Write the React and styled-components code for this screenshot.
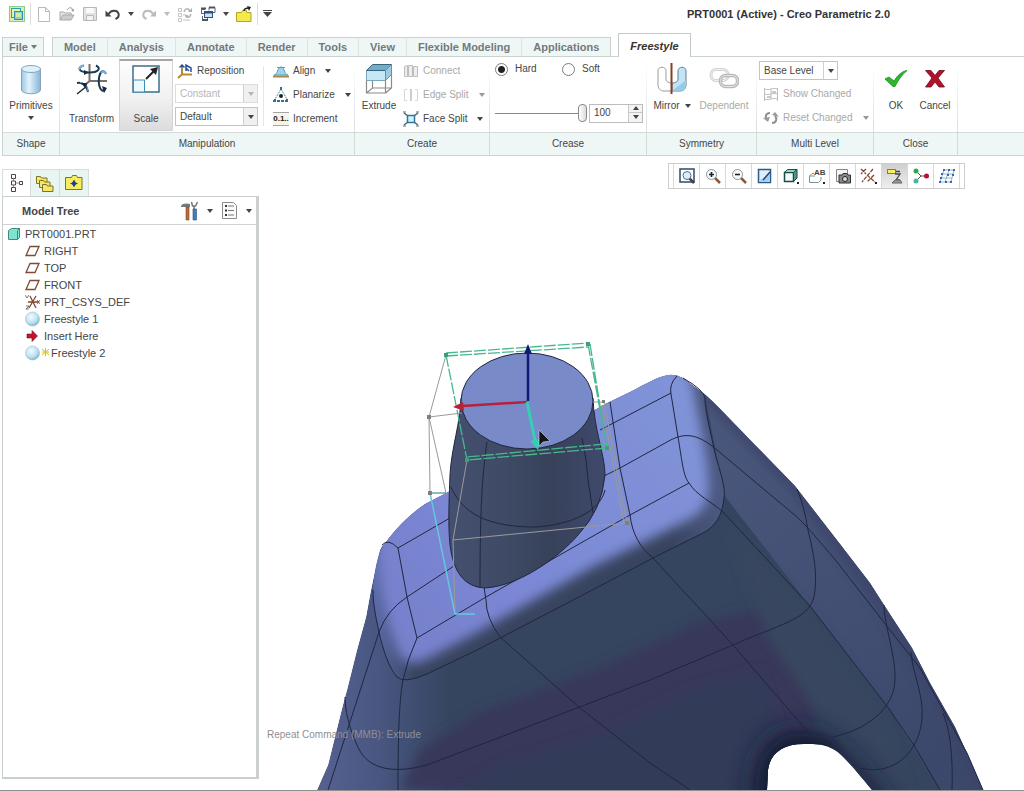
import React from 'react';
import styled, { createGlobalStyle, css } from 'styled-components';

const GlobalStyle = createGlobalStyle`
  * {
    box-sizing: border-box;
  }
  body {
    margin: 0;
    background: #fff;
    color: #454545;
    font: 10px/12px "Liberation Sans", Arial, sans-serif;
  }
  button, select, input {
    font: inherit;
    color: inherit;
  }
  button {
    padding: 0;
    border: 0;
    background: none;
  }
  svg {
    display: block;
    flex: none;
  }
`;

const Window = styled.div`
  display: flex;
  flex-direction: column;
  min-height: 100vh;
  border-bottom: 1px solid #8f8f8f;
`;

/* ---------- title bar ---------- */

const TitleBar = styled.header`
  display: flex;
  align-items: center;
  justify-content: space-between;
  height: 27px;
  margin-bottom: 6px;
  padding: 0 134px 0 9px;
`;

const QuickAccess = styled.div`
  display: flex;
  align-items: center;
  gap: 7px;
`;

const QuickDivider = styled.span`
  width: 1px;
  height: 22px;
  margin: 0 -2px;
  background: #dcdcdc;
`;

const Title = styled.h1`
  margin: 0;
  font-size: 11px;
  font-weight: bold;
  color: #333;
`;

/* ---------- tabs ---------- */

const TabBar = styled.nav`
  display: flex;
  align-items: flex-end;
  height: 23px;
  padding-left: 2px;
`;

const TabSet = styled.div`
  display: flex;
  margin: 0 7px 0 8px;
  border: 1px solid #c9d1cf;
  border-bottom: 0;
`;

const Tab = styled.button`
  height: 18px;
  padding: 0 11px;
  background: #eef7f5;
  border-right: 1px solid #dde5e3;
  font-size: 11px;
  font-weight: bold;
  color: #74797b;
  &:last-child {
    border-right: 0;
  }
`;

const FileTab = styled(Tab)`
  display: flex;
  align-items: center;
  gap: 3px;
  height: 19px;
  padding: 0 6px;
  border: 1px solid #c9d1cf;
  border-bottom: 0;
`;

const ActiveTab = styled(Tab)`
  position: relative;
  height: 24px;
  margin-bottom: -1px;
  background: #fff;
  border: 1px solid #c3cac8;
  border-bottom: 0;
  font-style: italic;
  color: #333;
  &:last-child {
    border-right: 1px solid #c3cac8;
  }
`;

/* ---------- ribbon ---------- */

const Ribbon = styled.div`
  display: flex;
  margin-left: 2px;
  border: 1px solid #cbd3d1;
  border-right: 0;
`;

const GroupBox = styled.section`
  display: flex;
  flex-direction: column;
  flex: none;
  width: ${p => p.$width}px;
`;

const GroupBody = styled.div`
  display: flex;
  height: 75px;
  padding: 2px 0 1px ${p => p.$pad || 0}px;
  justify-content: ${p => (p.$center ? 'center' : 'flex-start')};
  border-right: 1px solid;
  border-image: linear-gradient(#fff 10%, #d8dedc) 1;
`;

const groupStrip = css`
  height: 23px;
  border-top: 1px solid #d3dad8;
  background: #eef7f5;
`;

const GroupLabel = styled.h2`
  ${groupStrip}
  margin: 0;
  border-right: 1px solid #d3dad8;
  font-size: 10px;
  font-weight: normal;
  line-height: 22px;
  text-align: center;
`;

const RibbonRest = styled.div`
  ${groupStrip}
  flex: 1;
  align-self: flex-end;
`;

const BigButton = styled.button`
  display: flex;
  flex-direction: column;
  align-items: center;
  width: ${p => p.$width}px;
  height: 72px;
  padding-top: 4px;
  white-space: nowrap;
  ${p => p.$pressed && css`
    border: 1px solid #d4d4d4;
    border-top: 2px solid #a5a5a5;
    padding-top: 2px;
    background: linear-gradient(#fdfdfd, #f1f1f1 55%, #dcdcdc);
  `}
  &:disabled {
    color: #a9a9a9;
  }
`;

const BigIcon = styled.span`
  display: flex;
  height: ${p => (p.$tall ? 50 : 37)}px;
`;

const BigText = styled.span`
  display: flex;
  align-items: center;
  gap: 5px;
`;

const BigCaret = styled.span`
  display: flex;
  align-items: center;
  height: 12px;
`;

const Stack = styled.div`
  display: flex;
  flex-direction: column;
  width: ${p => p.$width}px;
  margin-left: 2px;
`;

const StackRow = styled.div`
  display: flex;
  align-items: center;
  height: ${p => p.$row || 24}px;
`;

const SmallButton = styled.button`
  display: flex;
  align-items: center;
  gap: 4px;
  padding-left: ${p => p.$indent || 0}px;
  white-space: nowrap;
  &:disabled {
    color: #a9a9a9;
  }
`;

const CaretGap = styled.span`
  width: 2px;
`;

const StackDivider = styled.span`
  width: 1px;
  height: 60px;
  margin: 7px 7px 0 5px;
  background: #e6e6e6;
`;

const SelectFrame = styled.span`
  position: relative;
  display: block;
  width: ${p => p.$width}px;
  height: 19px;
`;

const Select = styled.select`
  width: 100%;
  height: 100%;
  padding: 0 18px 0 4px;
  border: 1px solid #c4c4c4;
  border-radius: 0;
  background: #fff;
  appearance: none;
  &:disabled {
    border-color: #dcdcdc;
    color: #b5b5b5;
    opacity: 1;
  }
`;

const SelectArrow = styled.span`
  position: absolute;
  top: 1px;
  right: 1px;
  bottom: 1px;
  display: flex;
  align-items: center;
  justify-content: center;
  width: 14px;
  border-left: 1px solid #d0d0d0;
  background: ${p => (p.$plain ? 'none' : '#f0f0f0')};
  pointer-events: none;
`;

const CreaseRow = styled.div`
  display: flex;
  align-items: center;
  height: 20px;
`;

const RadioLabel = styled.label`
  display: flex;
  align-items: center;
  gap: 7px;
  width: 67px;
`;

const Radio = styled.input`
  width: 13px;
  height: 13px;
  margin: 0;
  border: 1px solid #7d7d7d;
  border-radius: 50%;
  appearance: none;
  background: #fff;
  &:checked {
    background: radial-gradient(#222 0 3px, #fff 4px);
  }
`;

const Slider = styled.input`
  width: 92px;
  height: 18px;
  margin: 0 2px 0 0;
  background: linear-gradient(#8a8a8a, #8a8a8a) 0 50% / 100% 1px no-repeat;
  appearance: none;
  &::-webkit-slider-thumb {
    width: 9px;
    height: 18px;
    border: 1px solid #8a8a8a;
    border-radius: 4px;
    background: linear-gradient(90deg, #fff, #dcdcdc);
    appearance: none;
  }
`;

const NumberBox = styled.span`
  display: flex;
  width: 54px;
  height: 19px;
  border: 1px solid #bdbdbd;
`;

const NumberInput = styled.input`
  flex: 1;
  min-width: 0;
  padding: 0 0 0 4px;
  border: 0;
`;

const Spin = styled.span`
  display: grid;
  grid-template-rows: 1fr 1fr;
  width: 14px;
  border-left: 1px solid #c8c8c8;
  background: #f4f4f4;
`;

const SpinButton = styled.button`
  display: flex;
  align-items: center;
  justify-content: center;
  &:first-child {
    border-bottom: 1px solid #c8c8c8;
  }
`;

/* ---------- side panel ---------- */

const Workspace = styled.main`
  display: flex;
  flex: 1;
`;

const Side = styled.aside`
  display: flex;
  flex-direction: column;
  flex: none;
  width: 260px;
  padding: 13px 0 11px 2px;
`;

const SideTabs = styled.div`
  display: flex;
`;

const SideTab = styled.button`
  display: flex;
  align-items: center;
  justify-content: center;
  width: 29px;
  height: 27px;
  border: 1px solid #d6dedc;
  border-left-width: ${p => (p.$on ? 1 : 0)}px;
  border-bottom: 0;
  background: ${p => (p.$on ? '#fff' : '#e9f5f2')};
`;

const TreePanel = styled.div`
  flex: 1;
  margin-right: 1px;
  border: 1px solid #c9cfcd;
  border-right: 3px solid #cbcfce;
  border-bottom: 2px solid #c9cfcd;
`;

const TreeHeader = styled.div`
  display: flex;
  align-items: center;
  gap: 8px;
  height: 28px;
  padding: 0 4px 0 19px;
  border-bottom: 1px solid #cfd4d3;
`;

const TreeTitle = styled.h2`
  flex: 1;
  margin: 0;
  font-size: 11px;
  font-weight: bold;
`;

const Tree = styled.ul`
  margin: 0;
  padding: 0 0 0 4px;
  list-style: none;
  font-size: 11px;
`;

const TreeItem = styled.li`
  display: flex;
  align-items: center;
  gap: ${p => (p.$tight ? 2 : 4)}px;
  height: 17px;
  padding-left: ${p => (p.$root ? 0 : 18)}px;
`;

/* ---------- graphics area ---------- */

const Viewport = styled.section`
  position: relative;
  display: flex;
  flex-direction: column;
  flex: 1;
  min-width: 0;
`;

const ViewBar = styled.div`
  display: flex;
  align-self: flex-end;
  height: 26px;
  margin: 7px 59px 11px 0;
  padding: 0 4px;
  border: 1px solid #cdcdcd;
`;

const ViewButton = styled.button`
  display: flex;
  align-items: center;
  justify-content: center;
  width: 26px;
  border-left: 1px solid #d8d8d8;
  background: ${p => (p.$on ? 'linear-gradient(#cfcfcf, #eee)' : '#fff')};
  &:last-child {
    width: 27px;
    border-right: 1px solid #d8d8d8;
  }
`;

const Canvas = styled.div`
  position: relative;
  flex: 1;
  min-height: 400px;
  & > svg {
    position: absolute;
    width: 100%;
    height: 100%;
  }
`;

const Hint = styled.p`
  position: absolute;
  bottom: 49px;
  left: 7px;
  margin: 0;
  color: #8f8f92;
`;

/* ---------- icons ---------- */

const Icon = ({ size = 16, w, h, children }) => (
  <svg width={w || size} height={h || size} viewBox={`0 0 ${w || size} ${h || size}`} fill="none" aria-hidden="true">
    {children}
  </svg>
);

const Caret = ({ color = '#444', up }) => (
  <Icon w={6} h={4}>
    <path d={up ? 'M0 4h6L3 0z' : 'M0 0h6L3 4z'} fill={color} />
  </Icon>
);

const LogoIcon = () => (
  <Icon>
    <rect x="0.5" y="0.5" width="15" height="15" fill="#d9efb0" stroke="#8cc98e" />
    <rect x="2.5" y="2.5" width="9" height="9" fill="#f2f29a" stroke="#2f9fb0" />
    <rect x="5.5" y="5.5" width="8" height="8" fill="#8fd6c0" stroke="#2b8fc6" />
    <rect x="7" y="7" width="5" height="4" fill="#d5eaa0" />
  </Icon>
);

const NewIcon = () => (
  <Icon>
    <path d="M2.5 1.5h7l4 4v10h-11z" fill="#fff" stroke="#b9b9b9" />
    <path d="M9.5 1.5v4h4" stroke="#b9b9b9" />
  </Icon>
);

const OpenIcon = () => (
  <Icon>
    <path d="M1 14V6h4l1 1h6v2" fill="#e4e4e4" stroke="#aaa" />
    <path d="M1 14l3-5h11l-3 5z" fill="#ccc" stroke="#aaa" />
    <path d="M8 4c2-3 5-3 6 0" stroke="#999" />
    <path d="M12 3.5h3.5L14 6z" fill="#999" />
  </Icon>
);

const SaveIcon = () => (
  <Icon>
    <path d="M1.5 1.5h13v13h-13z" fill="#e2e2e2" stroke="#b8b8b8" />
    <path d="M4 2h8v5H4z" fill="#fafafa" />
    <path d="M4.5 9.5h7v5h-7z" fill="#f2f2f2" stroke="#b8b8b8" />
  </Icon>
);

const UndoIcon = () => (
  <Icon>
    <path d="M3.5 8C6 4 12 3.5 13.5 7.5c.8 2.500-.8 4.500-3 5.500" stroke="#444" strokeWidth="2" />
    <path d="M0.500 4.500v6h6z" fill="#444" />
  </Icon>
);

const RedoIcon = () => (
  <Icon>
    <path d="M12 8C10 4 4 3.500 2.500 7.500c-.8 2.500.8 4.500 3 5.500" stroke="#bbb" strokeWidth="2" />
    <path d="M15 4.500v6H9z" fill="#bbb" />
  </Icon>
);

const RegenIcon = () => (
  <Icon>
    <path d="M1.500 2.500h3v3h-3zM1.500 7.500h3v3h-3zM1.500 12.500h3v3h-3zM6 14h7M6 9h2" stroke="#c4c4c4" />
    <path d="M7 6c1-4 4-4 6-1M14 8c-1 4-4 4-5 2" stroke="#b5b5b5" strokeWidth="1.500" />
    <path d="M11 6h4V2zM8 8l1 4 3-2z" fill="#b0b0b0" />
  </Icon>
);

const WindowsIcon = () => (
  <Icon>
    <path d="M5 3.500H1.500v4H5M9 1.500h6v5h-3M9 1.500v3M2.500 10v4.500h5V12" stroke="#5a6478" />
    <path d="M1 2.500h5M9 1.500h6M2 14h6" stroke="#4a5468" strokeWidth="2" />
    <rect x="4.500" y="5.500" width="8" height="6" fill="#cfdff2" stroke="#33507c" />
    <path d="M4 6.500h9" stroke="#33507c" strokeWidth="2" />
  </Icon>
);

const CloseFolderIcon = () => (
  <Icon>
    <path d="M0.500 6.500h5l1-2h4v2h4.500v9H.5z" fill="#f3ea4c" stroke="#b5a42c" />
    <path d="M8 5c0-3 3-3 5-3" stroke="#222" strokeWidth="1.500" />
    <path d="M11 0l4 1-2 4z" fill="#222" />
  </Icon>
);

const PrimitiveIcon = () => (
  <Icon w={24} h={32}>
    <defs>
      <linearGradient id="cyl">
        <stop offset="0" stopColor="#9cc8e6" />
        <stop offset="0.4" stopColor="#e2f3fc" />
        <stop offset="1" stopColor="#86b4d6" />
      </linearGradient>
    </defs>
    <path d="M2.500 6v21c1 5 18 5 19 0V6z" fill="url(#cyl)" stroke="#87a3b8" />
    <ellipse cx="12" cy="6" rx="9.500" ry="3.500" fill="#dff2fb" stroke="#87a3b8" />
  </Icon>
);

const TransformIcon = () => (
  <Icon w={34} h={34}>
    <path d="M14.500 1v17H32M14.500 18L10 22" stroke="#77706c" strokeWidth="2" />
    <path d="M9 2.500C2 4 3 9 13 9.500c10 .5 14-4 8-7" stroke="#1c3a58" strokeWidth="2" />
    <path d="M9 2.500C5 3.500 4 5 5 6.500" stroke="#7fb0d4" strokeWidth="2" />
    <path d="M9 7l5 2.500L9 12z" fill="#1c2c40" />
    <path d="M31 11c-2-5-6-3-7 4-1 8 2 15 6 12" stroke="#1c3a58" strokeWidth="2" />
    <path d="M31 11c-1-3-3-3.500-5-1" stroke="#7fb0d4" strokeWidth="2" />
    <path d="M27 23l5 2-3 5z" fill="#1c2c40" />
    <path d="M2 20c5-1 10 2 11 9" stroke="#1c3a58" strokeWidth="2" />
    <path d="M12 23L2 31" stroke="#222" strokeWidth="1.500" />
    <path d="M5 19.500c4 .2 7 3 8 9" stroke="#7fb0d4" />
    <path d="M6 20h6l-1 6z" fill="#1c2c40" />
  </Icon>
);

const ScaleIcon = () => (
  <Icon w={28} h={32}>
    <rect x="1" y="3" width="26" height="26" fill="#fff" stroke="#3e6f8c" strokeWidth="1.500" />
    <rect x="1.500" y="17" width="11" height="12" fill="#eef9ff" stroke="#3e8fb8" />
    <path d="M14 16l9-9" stroke="#222" strokeWidth="2" />
    <path d="M26 4l-8 2 6 6z" fill="#222" />
  </Icon>
);

const RepositionIcon = () => (
  <Icon>
    <path d="M5 3v8.500h10M5 11.500L1 15" stroke="#b98a2c" strokeWidth="2" />
    <path d="M2.500 4.500L5 2l2.500 2.500M9 8V2l5 3v4M9 5l3 3" stroke="#2a4f94" strokeWidth="1.500" />
  </Icon>
);

const AlignIcon = () => (
  <Icon>
    <path d="M1 12c4 0 3-8 7-8s3 8 7 8z" fill="#9fd4ee" stroke="#5f9cb8" />
    <path d="M4 4.500h8" stroke="#888" />
    <path d="M0 13.500h16" stroke="#a9854b" strokeWidth="2" />
  </Icon>
);

const PlanarizeIcon = () => (
  <Icon>
    <path d="M8 2L1.500 13M8 2l6.500 11" stroke="#4c86a6" strokeDasharray="2 1" />
    <path d="M0 14h16" stroke="#36708f" strokeWidth="2" strokeDasharray="3 1" />
    <circle cx="8" cy="9" r="2" fill="#222" />
    <path d="M7 0h2v3H7zM1 12h2v3H1zM13 12h2v3h-2z" fill="#36708f" />
  </Icon>
);

const IncrementBadge = styled.span`
  width: 16px;
  height: 14px;
  border: 1px solid #a5a5a5;
  border-width: 1px 0;
  background: #f7f4ea;
  font-size: 8px;
  font-weight: bold;
  line-height: 12px;
  color: #222;
`;

const ExtrudeIcon = () => (
  <Icon w={28} h={34}>
    <path d="M1.500 17v13h19V17M20.500 30l6-5V10M1.500 30l6-5h19M7.500 25V14" stroke="#8a8a8a" strokeWidth="1.200" />
    <path d="M1.500 7.500h19v10h-19z" fill="#c5e7f8" stroke="#7aa6bd" />
    <path d="M1.500 7.500l6-6h19l-6 6z" fill="#6eaecb" stroke="#3d6478" />
    <path d="M20.500 7.500l6-6v10l-6 6z" fill="#9dcbe2" stroke="#6593a8" />
  </Icon>
);

const ConnectIcon = () => (
  <Icon>
    <path d="M1.500 3.500l3-1v11h-3zM5.500 2.500h4v11h-4zM10.500 3.500h4v10h-4z" fill="#eee" stroke="#bdbdbd" />
  </Icon>
);

const EdgeSplitIcon = () => (
  <Icon>
    <path d="M4 2.500H1.500v11H4M12 2.500h2.500v11H12" stroke="#d6d6d6" />
    <path d="M8 2v12" stroke="#bcbcbc" strokeWidth="1.500" />
  </Icon>
);

const FaceSplitIcon = () => (
  <Icon>
    <path d="M1 2l4 3M15 2l-4 3M1 14l4-3M15 14l-4-3" stroke="#3d6a80" strokeWidth="1.500" />
    <rect x="4.500" y="4.500" width="7" height="7" fill="#d6f1fb" stroke="#2f7898" strokeWidth="1.500" />
    <path d="M0 1h3M13 1h3M0 15h3M13 15h3" stroke="#666" />
  </Icon>
);

const MirrorIcon = () => (
  <Icon w={30} h={32}>
    <path d="M1 8c0-5 8-5 8 0v8c0 3 3 4 6 4v8H7c-4 0-6-3-6-6z" fill="#fff" stroke="#9a9a9a" />
    <path d="M29 8c0-5-8-5-8 0v8c0 3-3 4-6 4v8h8c4 0 6-3 6-6z" fill="#c3e4f5" stroke="#5d7f92" />
    <path d="M15 28h8c4 0 6-3 6-6v-5z" fill="#96cbe6" />
    <path d="M14.500 0v31" stroke="#8a3c20" strokeWidth="2" />
  </Icon>
);

const DependentIcon = () => (
  <Icon w={30} h={32}>
    <rect x="2" y="6.500" width="17" height="11" rx="5" stroke="#d2d2d2" strokeWidth="3" />
    <rect x="2" y="6.500" width="17" height="11" rx="5" stroke="#f3f3f3" />
    <rect x="11.500" y="12.500" width="17" height="11" rx="5" stroke="#b9b9b9" strokeWidth="3.500" />
    <rect x="11.500" y="12.500" width="17" height="11" rx="5" stroke="#e6e6e6" />
  </Icon>
);

const ShowChangedIcon = () => (
  <Icon>
    <path d="M1.500 2v13M14.500 2v13M2 3c4 2 8-2 12 0M2 8c4 2 8-2 12 0M2 13c4 2 8-2 12 0M8 3v10" stroke="#bdbdbd" />
    <path d="M9 5h4v2H9zM4 10h4v2H4z" fill="#c9c9c9" />
  </Icon>
);

const ResetIcon = () => (
  <Icon>
    <path d="M7 3C2 3 2 8 4 10M9 13c5 0 5-5 3-7" stroke="#8f8f8f" strokeWidth="2" />
    <path d="M0 8l5 4 2-5zM9 5l3-3 4 5z" fill="#9a9a9a" />
  </Icon>
);

const OkIcon = () => (
  <Icon w={24} h={32}>
    <path d="M1 16l4-2 5 4C13 13 18 8 23 7.500c-5 4-9 10-12 16H9z" fill="#2fb52f" stroke="#168a1c" strokeWidth="0.800" />
  </Icon>
);

const CancelIcon = () => (
  <Icon w={20} h={32}>
    <path d="M0.500 7.500H6l4 5 4-5h5.500L13 15l6.500 9H14l-4-5-4 5H.5L7 15z" fill="#b3102c" stroke="#6e0a1c" strokeWidth="0.800" />
  </Icon>
);

const TreeTabIcon = () => (
  <Icon w={14} h={20}>
    <path d="M1.500 1.500h4v4h-4zM1.500 8h4v4h-4zM1.500 14.500h4v4h-4zM9.500 8.500h3v3h-3z" stroke="#444" />
    <path d="M3.500 5.500V8M3.500 12v2.500M5.500 10h4" stroke="#888" />
  </Icon>
);

const FoldersIcon = () => (
  <Icon w={18} h={19}>
    {[[0, 1], [3, 5], [6, 9]].map(([x, y]) => (
      <path key={x} transform={`translate(${x} ${y})`} d="M0.500 1.500h4l1 1.500h5.500v5.500H0.500z" fill="#f4e76a" stroke="#7d7226" />
    ))}
  </Icon>
);

const FavoritesIcon = () => (
  <Icon w={18} h={16}>
    <path d="M0.500 2.500h6l1-2h4l1 2h4.500v12H.5z" fill="#f6ec60" stroke="#7d7226" />
    <path d="M9 5.500l3 3-3 3-3-3z" fill="#26398f" />
    <path d="M9 5v7M5.500 8.500h7" stroke="#26398f" />
  </Icon>
);

const ToolsIcon = () => (
  <Icon w={18} h={20}>
    <path d="M0 5c1-3 6-3 9-2v3H0z" fill="#707a80" />
    <path d="M5 6h3v13H5z" fill="#c06a3c" stroke="#7b4428" strokeWidth="0.600" />
    <path d="M10.500 1l1 4h3l2-4M13 5v4" stroke="#777" strokeWidth="1.500" />
    <path d="M12 8h3.500v11H12z" fill="#3f7fc0" stroke="#2a4f80" strokeWidth="0.600" />
  </Icon>
);

const ListIcon = () => (
  <Icon w={17} h={19}>
    <path d="M1.500 1.500h11l3 3v13h-14z" fill="#fbfbfb" stroke="#8c8c8c" />
    <path d="M4 5h2M4 9.500h2M4 14h2" stroke="#333" strokeWidth="2" />
    <path d="M7 5h6M7 9.500h6M7 14h6" stroke="#777" />
  </Icon>
);

const PartIcon = () => (
  <Icon w={14} h={14}>
    <path d="M1.500 3.500l3-2h8v9l-2 2h-9z" fill="#7fe3cf" stroke="#3d8a80" />
    <path d="M10.500 3.500v9M10.500 3.500l2-2" stroke="#3d8a80" />
  </Icon>
);

const PlaneIcon = () => (
  <Icon w={15} h={14}>
    <path d="M5 2.500h9l-4 9H1z" stroke="#7c4c36" strokeWidth="1.300" />
  </Icon>
);

const CsysIcon = () => (
  <Icon w={15} h={16}>
    <path d="M3 8h11M5 2l6 12M11 2L4 14" stroke="#85472f" strokeWidth="1.300" />
    <path d="M0 1l2 3 2-3M1 12h3l-3 3h3M12 6l3 4M15 6l-3 4" stroke="#555" strokeWidth="0.800" />
  </Icon>
);

const SphereIcon = () => (
  <Icon w={15} h={16}>
    <defs>
      <radialGradient id="sphere" cx="0.400" cy="0.350" r="0.650">
        <stop offset="0" stopColor="#f4fcff" />
        <stop offset="0.700" stopColor="#b8dff0" />
        <stop offset="1" stopColor="#86b2c8" />
      </radialGradient>
    </defs>
    <circle cx="7.500" cy="8" r="7" fill="url(#sphere)" stroke="#9cc0d2" strokeWidth="0.600" />
  </Icon>
);

const InsertIcon = () => (
  <Icon w={15} h={14}>
    <path d="M2 5h5V1.500l5.500 5.500L7 12.500V9H2z" fill="#c0142c" stroke="#7d1020" strokeWidth="0.600" />
  </Icon>
);

const SparkIcon = () => (
  <Icon w={7} h={16}>
    <path d="M0 4l7 6M7 4l-7 6M3.500 3v8M0 7h7" stroke="#cfc41e" />
  </Icon>
);

const Lens = ({ minus }) => (
  <Icon>
    <path d="M9.500 9.500l5.500 5.500" stroke="#8a5a3a" strokeWidth="2.500" />
    <circle cx="6.500" cy="6.500" r="5" fill="#f6fafc" stroke="#8a959c" />
    <path d={minus ? 'M4 6.500h5' : 'M4 6.500h5M6.500 4v5'} stroke="#222" strokeWidth="1.600" />
  </Icon>
);

const RefitIcon = () => (
  <Icon>
    <rect x="1" y="1" width="14" height="13" fill="#fff" stroke="#2d4a72" strokeWidth="1.500" />
    <path d="M10 10l5 5" stroke="#444" strokeWidth="2.500" />
    <circle cx="8" cy="7.500" r="4" fill="#dceefa" stroke="#5c6c80" />
  </Icon>
);

const RepaintIcon = () => (
  <Icon>
    <rect x="1.500" y="1.500" width="12" height="13" fill="#dceffb" stroke="#2d5a8c" strokeWidth="1.500" />
    <path d="M2 14l2-3c2 0 3-1 4-2l5-5v10z" fill="#a5cfee" />
    <path d="M6 12l7-8" stroke="#28456e" strokeWidth="1.500" />
  </Icon>
);

const StyleIcon = () => (
  <Icon>
    <path d="M1.500 4.500h9v9h-9z" fill="#f2fbfa" stroke="#1f4a44" strokeWidth="1.500" />
    <path d="M1.500 4.500l3-3h9.500l-3 3z" fill="#8fd6cc" stroke="#1f4a44" />
    <path d="M10.500 4.500l3.500-3V10l-3.500 3.500z" fill="#4a9a90" stroke="#1f4a44" />
    <path d="M14 15h2" stroke="#222" strokeWidth="2" />
  </Icon>
);

const OrientIcon = () => (
  <Icon w={18}>
    <path d="M4 5.500L1.500 8v6.500h9L13 12V9M1.500 8H7M4 5.500H6" stroke="#7a969c" />
    <text x="6" y="7" fontSize="8" fontWeight="bold" fill="#444">AB</text>
    <path d="M15 15h2" stroke="#222" strokeWidth="2" />
  </Icon>
);

const CameraIcon = () => (
  <Icon>
    <path d="M1.500 1.500h11v12h-11z" fill="#f5f5f5" stroke="#888" />
    <path d="M4 7h3l1-1.500h4L13 7h2.500v8H4z" fill="#888" stroke="#333" />
    <circle cx="10" cy="11" r="2.500" fill="#ddd" stroke="#222" />
  </Icon>
);

const DatumIcon = () => (
  <Icon w={18}>
    <path d="M1 1l5 5M6 1L1 6M13 1L2 14M7 7l8 7M14 7l-7 7" stroke="#85472f" strokeWidth="1.300" strokeDasharray="4 1" />
    <path d="M15 15h2" stroke="#222" strokeWidth="2" />
  </Icon>
);

const AnnotationIcon = () => (
  <Icon>
    <rect x="0.500" y="1.500" width="8" height="4" fill="#f7ee5e" stroke="#8a8020" />
    <path d="M9 3.500h4M8 6h5l-4 6h4" stroke="#444" strokeWidth="1.300" />
    <path d="M5 15h10l-2-3H8z" fill="#999" stroke="#666" />
  </Icon>
);

const SpinCenterIcon = () => (
  <Icon>
    <path d="M3 3l5 5-5 5M8 8h6" stroke="#555" />
    <circle cx="3" cy="3" r="2.500" fill="#30a850" />
    <circle cx="3" cy="13" r="2.500" fill="#42b8a0" />
    <circle cx="13.500" cy="8" r="2.500" fill="#b3142e" />
  </Icon>
);

const MeshIcon = () => (
  <Icon>
    <path d="M5 2h10M2 6h12M1 10h12M1 14h11M5 2L1 14M10 2L6 14M15 2l-3 12" stroke="#8fb4da" />
    <path d="M4 1h2v2H4zM9 1h2v2H9zM14 1h2v2h-2zM2 5h2v2H2zM8 6h2v2H8zM13 6h2v2h-2zM0 13h2v2H0zM6 13h2v2H6zM11 13h2v2h-2zM1 9h2v2H1z" fill="#3d68a8" />
  </Icon>
);

/* ---------- model ---------- */

const bodyPath = 'M317 790L328 765C334 742 340 715 347 690L357 650 366 617 371 590C375 572 377 560 380 550Q382 545 386 542C396 528 410 514 425 504L452 490 560 430 605 404 632 391C645 384 657 377 668 375Q676 374 683 378L706 395C724 412 744 434 760 450L795 486 840 544 870 583 884 605 912 648 930 683 955 727 970 760 983 790H872C861 777 853 767 846 760C832 744 820 744 804 744C782 744 770 754 768 770L767 790Z';
const topPath = 'M386 542C396 528 410 514 425 504L452 490 560 430 605 404 632 391C645 384 657 377 668 375Q676 374 683 378L705 395C705 410 709 425 715 453C720 472 726 488 724 498C722 516 716 525 705 532L653 558 577 598 477 650 427 674Q404 684 397 677C389 668 383 650 379 632C375 614 373 602 373 590C374 572 378 550 386 542Z';
const litPath = 'M378 540L425 490 560 410 632 375 668 362 690 376 698 420C704 450 708 476 707 490Q706 508 690 517L590 566 470 634 425 658Q408 666 401 654C390 634 384 600 380 575Z';
const tubePath = 'M461 398C461 420 451 450 450 475C449 500 448 525 450 545Q455 587 485 588C520 586 560 556 578 535Q602 510 605 475C605 455 594 430 593 398Z';

const edges = [
  'M677 376Q669 384 671 394L678 437C682 460 683 476 689 483C696 495 712 502 723 512L810 606 887 706 915 747 940 790',
  'M671 393L600 430',
  'M600 478L620 468 667 442C684 432 697 433 717 450L797 517C812 531 822 545 833 557L890 630 920 668 967 753 983 790',
  'M417 638L486 597 630 515 689 483',
  'M610 402L620 468 630 515C632 533 640 548 653 558L733 645 813 738',
  'M683 378Q704 390 705 398C705 410 709 425 715 453C720 472 726 488 724 498C722 516 716 525 705 532L653 558 577 598 477 650 427 674Q404 684 397 677C389 668 383 650 379 632C375 614 373 602 373 590',
  'M797 489Q804 505 808 530C814 555 818 575 814 597C808 620 780 624 733 645L650 680 577 708 427 765C390 775 366 768 357 745C349 728 345 710 345 697',
  'M884 605C884 625 896 655 895 680C894 710 865 730 833 737',
  'M911 652C912 672 924 695 922 718C920 750 895 777 860 768',
  'M943 713C950 730 953 755 952 790',
  'M382 545Q388 538 398 548L407 597 417 638Q407 660 403 680C399 700 398 740 398 790',
  'M398 548L450 518',
  'M454 566L407 597Q387 610 379 632L349 725 328 790',
  'M484 587L486 600Q486 618 500 637L580 708 650 763 690 790',
];

const Model = () => (
  <svg viewBox="260 200 764 590" preserveAspectRatio="xMinYMax slice" fill="none" role="img" aria-label="Part model">
    <defs>
      <clipPath id="bodyClip"><path d={bodyPath} /></clipPath>
      <clipPath id="topClip"><path d={topPath} /></clipPath>
      <filter id="soft" filterUnits="userSpaceOnUse" x="260" y="300" width="800" height="600"><feGaussianBlur stdDeviation="6" /></filter>
      <filter id="softer" filterUnits="userSpaceOnUse" x="260" y="300" width="800" height="600"><feGaussianBlur stdDeviation="14" /></filter>
      <linearGradient id="base" gradientUnits="userSpaceOnUse" x1="330" y1="0" x2="450" y2="0">
        <stop offset="0" stopColor="#53608f" />
        <stop offset="0.450" stopColor="#47557f" />
        <stop offset="1" stopColor="#35455f" />
      </linearGradient>
      <linearGradient id="flank" gradientUnits="userSpaceOnUse" x1="720" y1="420" x2="940" y2="760">
        <stop offset="0" stopColor="#4a577c" />
        <stop offset="1" stopColor="#3c486b" />
      </linearGradient>
      <linearGradient id="bevel" gradientUnits="userSpaceOnUse" x1="373" y1="0" x2="724" y2="0">
        <stop offset="0" stopColor="#5a69a8" />
        <stop offset="0.120" stopColor="#38455f" />
        <stop offset="0.850" stopColor="#38445f" />
        <stop offset="1" stopColor="#4d5a84" />
      </linearGradient>
      <linearGradient id="lit" gradientUnits="userSpaceOnUse" x1="380" y1="620" x2="700" y2="400">
        <stop offset="0" stopColor="#7680cb" />
        <stop offset="0.400" stopColor="#7c89d6" />
        <stop offset="1" stopColor="#8093d8" />
      </linearGradient>
      <linearGradient id="tube" gradientUnits="userSpaceOnUse" x1="450" y1="0" x2="605" y2="0">
        <stop offset="0" stopColor="#44506f" />
        <stop offset="0.350" stopColor="#3f4a66" />
        <stop offset="0.650" stopColor="#374159" />
        <stop offset="1" stopColor="#3f4a6c" />
      </linearGradient>
    </defs>

    <g clipPath="url(#bodyClip)">
      <path d={bodyPath} fill="url(#base)" />
      <path d="M420 750L480 712 600 668 700 622 760 610 820 700 800 790H400Z" fill="#38385a" filter="url(#soft)" />
      <path d="M430 810L500 765 600 735 690 690 760 670 800 790V810Z" fill="#303b59" filter="url(#soft)" />
      <path d="M705 395L724 495 810 606 887 706 940 790H1000L955 700 800 480Z" fill="url(#flank)" />
      <path d="M724 520L810 615 880 710 915 810H875L840 745 770 640Z" fill="#39475f" filter="url(#soft)" />
      <path d="M706 395L795 486 884 605 955 727 983 790" stroke="#3a4268" strokeWidth="10" filter="url(#soft)" />
      <path d="M760 840L768 770Q775 738 806 744Q835 744 900 840" stroke="#171f38" strokeWidth="24" filter="url(#softer)" />
      <path d="M767 830V780Q772 744 804 744Q820 744 832 750" stroke="#171f36" strokeWidth="12" filter="url(#soft)" />
    </g>
    <g clipPath="url(#topClip)">
      <path d={topPath} fill="url(#bevel)" />
      <path d={litPath} fill="url(#lit)" stroke="url(#lit)" strokeWidth="4" filter="url(#soft)" />
    </g>
    <g stroke="#20263f" strokeWidth="1">
      {edges.map(d => <path key={d} d={d} />)}
    </g>

    <path d={tubePath} fill="url(#tube)" />
    <g stroke="#20263f">
      <path d={tubePath} />
      <path d="M487 442C483 470 480 500 480 587M582 438Q587 460 588 480L593 513M451 487C465 520 500 527 535 527C570 525 600 512 605 490" />
      <ellipse cx="527" cy="401" rx="66" ry="48" fill="#788ac7" />
    </g>

    <g stroke="#9a9a9c">
      <path d="M446 355L429 417 430 493M429 417L462 413M429 417L446 493M467 460L453 540 627 523 604 402H593M453 540L455 614M602 405L624 523" />
    </g>
    <g stroke="#46b98c" strokeWidth="1.300">
      <path d="M446 353L588 343M446 356L588 347M588 344L607 448M590 344L604 430M607 448L467 460M605 444L467 457M446 355L467 460" strokeDasharray="12 2" />
      <path d="M430 493H446" stroke="#4f9a90" />
    </g>
    <path d="M430 493L455 614L475 614" stroke="#63c7e0" strokeWidth="1.500" />
    <path d="M444 353h4v4h-4zM586 342h4v4h-4zM465 458h4v4h-4zM605 446h4v4h-4z" fill="#3f9d7c" />
    <path d="M427 415h4v4h-4zM428 491h4v4h-4zM602 400h3v3h-3zM625 521h4v4h-4z" fill="#7a827c" />

    <path d="M528 401V350" stroke="#121a78" strokeWidth="2.500" />
    <path d="M528 344l-4 10h8z" fill="#121a78" />
    <path d="M527 402L462 406" stroke="#b8203c" strokeWidth="2.500" />
    <path d="M453 407l10-5 1 9z" fill="#b8203c" />
    <path d="M527 402L536 445" stroke="#35d0b4" strokeWidth="3" />
    <path d="M530 441l10-2-2 11z" fill="#35d0b4" />
    <path d="M539 430v16l4-4 7-1z" fill="#15151c" stroke="#d8d0d8" strokeWidth="0.600" />
  </svg>
);

/* ---------- pieces ---------- */

const Group = ({ label, width, pad, center, children }) => (
  <GroupBox $width={width}>
    <GroupBody $pad={pad} $center={center}>{children}</GroupBody>
    <GroupLabel>{label}</GroupLabel>
  </GroupBox>
);

const Big = ({ icon, label, width, tall, pressed, disabled, caret, below }) => (
  <BigButton $width={width} $pressed={pressed} disabled={disabled}>
    <BigIcon $tall={tall}>{icon}</BigIcon>
    <BigText>{label}{caret && <Caret />}</BigText>
    {below && <BigCaret><Caret /></BigCaret>}
  </BigButton>
);

const Small = ({ icon, label, row, indent, disabled, caret }) => (
  <StackRow $row={row}>
    <SmallButton $indent={indent} disabled={disabled}>
      {icon}
      <span>{label}</span>
      {caret && <><CaretGap /><Caret color={disabled ? '#999' : undefined} /></>}
    </SmallButton>
  </StackRow>
);

const DropDown = ({ name, value, width, disabled, plain }) => (
  <StackRow $row={23}>
    <SelectFrame $width={width}>
      <Select aria-label={name} defaultValue={value} disabled={disabled}>
        <option>{value}</option>
      </Select>
      <SelectArrow $plain={plain}><Caret color={disabled ? '#b5b5b5' : '#444'} /></SelectArrow>
    </SelectFrame>
  </StackRow>
);

const tabs = ['Model', 'Analysis', 'Annotate', 'Render', 'Tools', 'View', 'Flexible Modeling', 'Applications'];

const treeItems = [
  ['RIGHT', <PlaneIcon />],
  ['TOP', <PlaneIcon />],
  ['FRONT', <PlaneIcon />],
  ['PRT_CSYS_DEF', <CsysIcon />],
  ['Freestyle 1', <SphereIcon />],
  ['Insert Here', <InsertIcon />],
];

const viewTools = [
  ['Refit', <RefitIcon />],
  ['Zoom In', <Lens />],
  ['Zoom Out', <Lens minus />],
  ['Repaint', <RepaintIcon />],
  ['Display Style', <StyleIcon />],
  ['Saved Orientations', <OrientIcon />],
  ['View Manager', <CameraIcon />],
  ['Datum Display', <DatumIcon />],
  ['Annotation Display', <AnnotationIcon />],
  ['Spin Center', <SpinCenterIcon />],
  ['Control Mesh', <MeshIcon />],
];

export default function App() {
  return (
    <Window>
      <GlobalStyle />
      <TitleBar>
        <QuickAccess>
          <LogoIcon />
          <QuickDivider />
          <button aria-label="New"><NewIcon /></button>
          <button aria-label="Open"><OpenIcon /></button>
          <button aria-label="Save"><SaveIcon /></button>
          <button aria-label="Undo"><UndoIcon /></button>
          <button aria-label="Undo list"><Caret /></button>
          <button aria-label="Redo"><RedoIcon /></button>
          <button aria-label="Redo list"><Caret color="#bbb" /></button>
          <button aria-label="Regenerate"><RegenIcon /></button>
          <button aria-label="Windows"><WindowsIcon /></button>
          <button aria-label="Windows list"><Caret /></button>
          <button aria-label="Close"><CloseFolderIcon /></button>
          <QuickDivider />
          <button aria-label="Customize">
            <Icon w={9} h={7}><path d="M0 .5h9" stroke="#444" /><path d="M0 2h9L4.500 7z" fill="#444" /></Icon>
          </button>
        </QuickAccess>
        <Title>PRT0001 (Active) - Creo Parametric 2.0</Title>
      </TitleBar>

      <TabBar>
        <FileTab>File <Caret color="#74797b" /></FileTab>
        <TabSet>
          {tabs.map(name => <Tab key={name}>{name}</Tab>)}
        </TabSet>
        <ActiveTab>Freestyle</ActiveTab>
      </TabBar>

      <Ribbon>
        <Group label="Shape" width={57} center>
          <Big icon={<PrimitiveIcon />} label="Primitives" width={56} below />
        </Group>
        <Group label="Manipulation" width={295} pad={4}>
          <Big icon={<TransformIcon />} label="Transform" width={55} tall />
          <Big icon={<ScaleIcon />} label="Scale" width={54} tall pressed />
          <Stack $width={83}>
            <Small icon={<RepositionIcon />} label="Reposition" row={23} indent={2} />
            <DropDown name="Falloff" value="Constant" width={83} disabled />
            <DropDown name="Alignment" value="Default" width={83} />
          </Stack>
          <StackDivider />
          <Stack>
            <Small icon={<AlignIcon />} label="Align" caret />
            <Small icon={<PlanarizeIcon />} label="Planarize" caret />
            <Small icon={<IncrementBadge>0.1..</IncrementBadge>} label="Increment" />
          </Stack>
        </Group>
        <Group label="Create" width={135} pad={2}>
          <Big icon={<ExtrudeIcon />} label="Extrude" width={44} />
          <Stack>
            <Small icon={<ConnectIcon />} label="Connect" disabled />
            <Small icon={<EdgeSplitIcon />} label="Edge Split" disabled caret />
            <Small icon={<FaceSplitIcon />} label="Face Split" caret />
          </Stack>
        </Group>
        <Group label="Crease" width={157} pad={3}>
          <Stack>
            <CreaseRow>
              <RadioLabel><Radio type="radio" name="crease" defaultChecked />Hard</RadioLabel>
              <RadioLabel><Radio type="radio" name="crease" />Soft</RadioLabel>
            </CreaseRow>
            <StackRow />
            <CreaseRow>
              <Slider type="range" min="0" max="100" defaultValue="100" aria-label="Crease amount" />
              <NumberBox>
                <NumberInput type="text" defaultValue="100" aria-label="Crease value" />
                <Spin>
                  <SpinButton aria-label="Increase"><Caret up /></SpinButton>
                  <SpinButton aria-label="Decrease"><Caret /></SpinButton>
                </Spin>
              </NumberBox>
            </CreaseRow>
          </Stack>
        </Group>
        <Group label="Symmetry" width={110} pad={2}>
          <Big icon={<MirrorIcon />} label="Mirror" width={46} caret />
          <Big icon={<DependentIcon />} label="Dependent" width={58} disabled />
        </Group>
        <Group label="Multi Level" width={117}>
          <Stack>
            <DropDown name="Level" value="Base Level" width={79} plain />
            <Small icon={<ShowChangedIcon />} label="Show Changed" row={24} indent={4} disabled />
            <Small icon={<ResetIcon />} label="Reset Changed" row={24} indent={4} disabled caret />
          </Stack>
        </Group>
        <Group label="Close" width={84} pad={2}>
          <Big icon={<OkIcon />} label="OK" width={40} />
          <Big icon={<CancelIcon />} label="Cancel" width={38} />
        </Group>
        <RibbonRest />
      </Ribbon>

      <Workspace>
        <Side>
          <SideTabs>
            <SideTab $on aria-label="Model Tree"><TreeTabIcon /></SideTab>
            <SideTab aria-label="Folder Browser"><FoldersIcon /></SideTab>
            <SideTab aria-label="Favorites"><FavoritesIcon /></SideTab>
          </SideTabs>
          <TreePanel>
            <TreeHeader>
              <TreeTitle>Model Tree</TreeTitle>
              <button aria-label="Settings"><ToolsIcon /></button>
              <button aria-label="Settings list"><Caret /></button>
              <button aria-label="Show"><ListIcon /></button>
              <button aria-label="Show list"><Caret /></button>
            </TreeHeader>
            <Tree>
              <TreeItem $root><PartIcon />PRT0001.PRT</TreeItem>
              {treeItems.map(([name, icon]) => (
                <TreeItem key={name}>{icon}{name}</TreeItem>
              ))}
              <TreeItem $tight><SphereIcon /><SparkIcon />Freestyle 2</TreeItem>
            </Tree>
          </TreePanel>
        </Side>
        <Viewport>
          <ViewBar>
            {viewTools.map(([name, icon]) => (
              <ViewButton key={name} aria-label={name} $on={name === 'Annotation Display'}>{icon}</ViewButton>
            ))}
          </ViewBar>
          <Canvas>
            <Model />
            <Hint>Repeat Command (MMB): Extrude</Hint>
          </Canvas>
        </Viewport>
      </Workspace>
    </Window>
  );
}
